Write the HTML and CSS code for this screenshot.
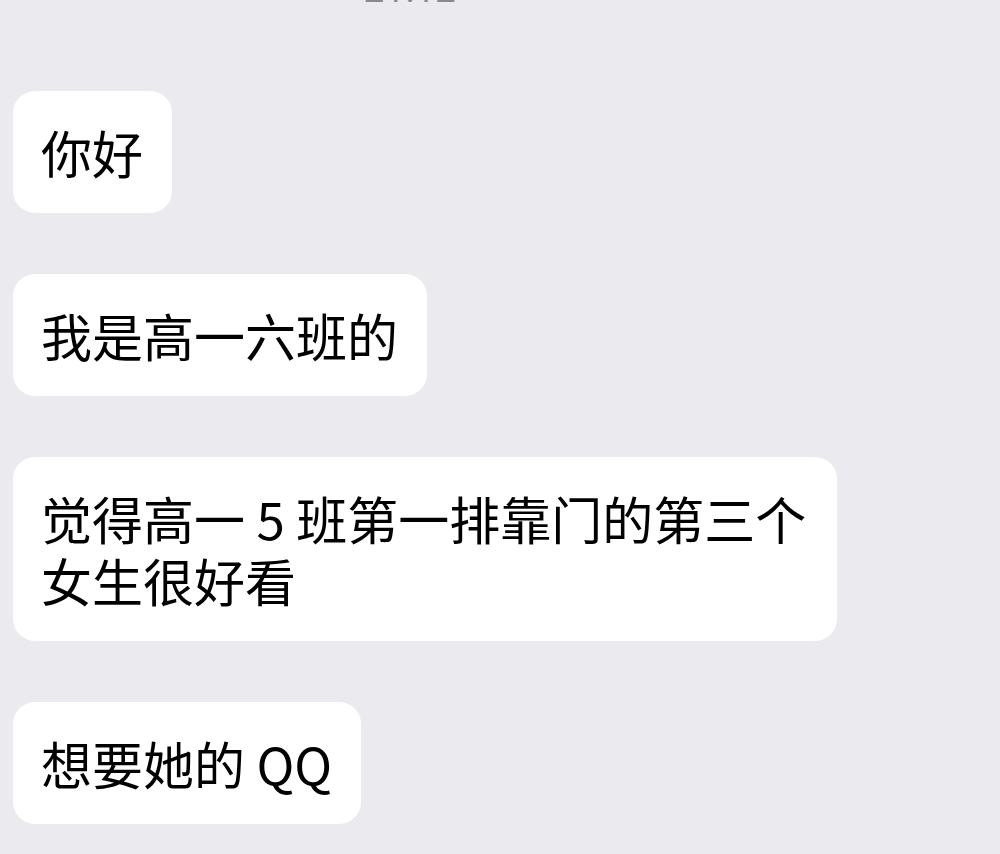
FILE: index.html
```html
<!DOCTYPE html>
<html lang="zh-CN">
<head>
<meta charset="utf-8">
<link rel="stylesheet" href="styles.css">
</head>
<body>
<div class="chat">
  <div class="time">21:12</div>
  <div class="messages">
    <div class="bubble">你好</div>
    <div class="bubble">我是高一六班的</div>
    <div class="bubble">觉得高一 5 班第一排靠门的第三个女生很好看</div>
    <div class="bubble">想要她的 QQ</div>
  </div>
</div>
</body>
</html>
```
FILE: styles.css
```css
html, body {
  margin: 0;
  padding: 0;
  background: #ebebef;
}
body {
  width: 1000px;
  height: 854px;
  overflow: hidden;
  font-family: "Noto Sans CJK SC", "Noto Sans", sans-serif;
  color: #000;
}
.chat {
  padding: 0 13px;
}
.time {
  width: 794px;
  text-align: center;
  font-size: 36px;
  line-height: 40px;
  height: 40px;
  margin-top: -31px;
  color: #8a8a8e;
  font-family: "Noto Sans", "Noto Sans CJK SC", sans-serif;
}
.messages {
  display: flex;
  flex-direction: column;
  align-items: flex-start;
  gap: 61px;
  margin-top: 82px;
}
.bubble {
  background: #fff;
  border-radius: 22px;
  padding: 30px 29px 30px 28px;
  font-size: 51px;
  line-height: 62px;
  max-width: 824px;
  box-sizing: border-box;
}
```
